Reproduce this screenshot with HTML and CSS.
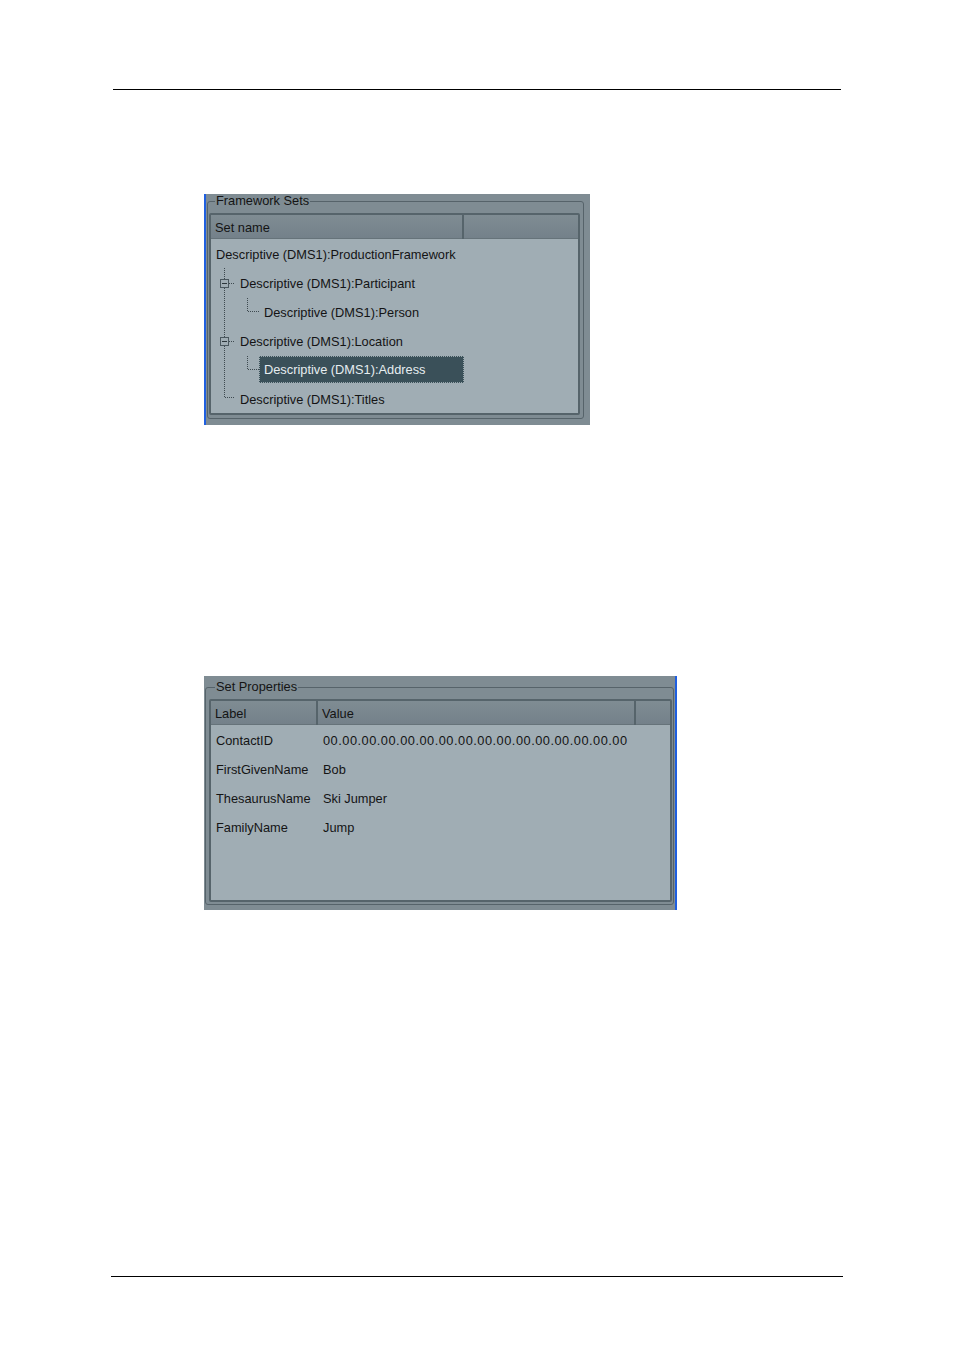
FILE: index.html
```html
<!DOCTYPE html>
<html>
<head>
<meta charset="utf-8">
<link rel="stylesheet" href="styles.css">
</head>
<body>
<div class="page">
  <div class="rule rule-top"></div>

  <div class="panel panel-sets">
    <fieldset class="group">
      <legend>Framework Sets</legend>
      <div class="list list-sets">
        <div class="head head-sets">
          <div class="hcell">Set name</div>
          <div class="hcell hfill"></div>
        </div>
        <div class="body">
          <svg class="tree" width="60" height="174" viewBox="0 0 60 174">
            <g stroke="#3e4a50" stroke-width="1" stroke-dasharray="1 1" fill="none">
              <line x1="13.5" y1="29" x2="13.5" y2="158"/>
              <line x1="18" y1="44.5" x2="24" y2="44.5"/>
              <line x1="18" y1="102.5" x2="24" y2="102.5"/>
              <line x1="14" y1="158.5" x2="24" y2="158.5"/>
              <line x1="36.5" y1="59" x2="36.5" y2="72"/>
              <line x1="37" y1="72.5" x2="48" y2="72.5"/>
              <line x1="36.5" y1="117" x2="36.5" y2="130"/>
              <line x1="37" y1="130.5" x2="48" y2="130.5"/>
            </g>
            <g stroke="#4b585f" stroke-width="1" fill="#a0adb4">
              <rect x="9.5" y="40.5" width="8" height="8"/>
              <rect x="9.5" y="98.5" width="8" height="8"/>
            </g>
            <g stroke="#2c363b" stroke-width="1">
              <line x1="11" y1="44.5" x2="16" y2="44.5"/>
              <line x1="11" y1="102.5" x2="16" y2="102.5"/>
            </g>
          </svg>
          <div class="row lvl0"><span class="item">Descriptive (DMS1):ProductionFramework</span></div>
          <div class="row lvl1"><span class="item">Descriptive (DMS1):Participant</span></div>
          <div class="row lvl2"><span class="item">Descriptive (DMS1):Person</span></div>
          <div class="row lvl1"><span class="item">Descriptive (DMS1):Location</span></div>
          <div class="row lvl2 sel-row"><span class="item selected">Descriptive (DMS1):Address</span></div>
          <div class="row lvl1"><span class="item">Descriptive (DMS1):Titles</span></div>
        </div>
      </div>
    </fieldset>
  </div>

  <div class="panel panel-props">
    <fieldset class="group">
      <legend>Set Properties</legend>
      <div class="list list-props">
        <div class="head head-props">
          <div class="hcell">Label</div>
          <div class="hcell">Value</div>
          <div class="hcell hfill"></div>
        </div>
        <div class="body">
          <div class="prow"><span>ContactID</span><span class="hex">00.00.00.00.00.00.00.00.00.00.00.00.00.00.00.00</span></div>
          <div class="prow"><span>FirstGivenName</span><span>Bob</span></div>
          <div class="prow"><span>ThesaurusName</span><span>Ski Jumper</span></div>
          <div class="prow"><span>FamilyName</span><span>Jump</span></div>
        </div>
      </div>
    </fieldset>
  </div>

  <div class="rule rule-bottom"></div>
</div>
</body>
</html>
```

FILE: styles.css
```css
html, body {
  margin: 0;
  padding: 0;
  background: #ffffff;
}

.page {
  width: 954px;
  height: 1349px;
  overflow: hidden;
  font-family: "Liberation Sans", Arial, sans-serif;
  font-size: 12.8px;
  color: #141414;
}

.rule {
  height: 1px;
  background: #000;
}

.rule-top {
  margin-top: 89px;
  margin-left: 113px;
  width: 728px;
}

.rule-bottom {
  margin-top: 366px;
  margin-left: 111px;
  width: 732px;
}

.panel {
  box-sizing: border-box;
  background: #7f8c93;
}

.panel-sets {
  margin-top: 104px;
  margin-left: 204px;
  width: 386px;
  height: 231px;
  border-left: 2px solid #1f5fe0;
  padding: 0 6px 6px 1px;
}

.panel-props {
  margin-top: 251px;
  margin-left: 204px;
  width: 473px;
  height: 234px;
  border-right: 2px solid #1f5fe0;
  padding: 4px 1px 5px 1px;
}

.group {
  margin: 0;
  border: 1px solid #56636a;
  border-radius: 3px;
  min-width: 0;
}

.panel-sets .group {
  padding: 5px 3px 3px 1px;
}

.panel-props .group {
  padding: 5px 1px 2px 3px;
}

.group legend {
  padding: 0 1px;
  margin-left: 6px;
  line-height: 14px;
  font-size: 12.8px;
  color: #141414;
}

.list {
  box-sizing: border-box;
  background: #a0adb4;
  border: 2px solid #56646b;
  border-radius: 2px;
}

.list-sets {
  height: 202px;
}

.list-props {
  height: 203px;
}

.head {
  display: grid;
  height: 24px;
  background: linear-gradient(#7f8c93, #74818a);
  border-bottom: 1px solid #66737a;
  box-sizing: border-box;
}

.head-sets {
  grid-template-columns: 253px 1fr;
}

.head-props {
  grid-template-columns: 107px 318px 1fr;
}

.hcell {
  box-sizing: border-box;
  padding-left: 4px;
  padding-top: 1px;
  line-height: 23px;
  border-right: 2px solid #56646b;
  color: #141414;
}

.hcell.hfill {
  border-right: none;
}

.body {
  position: relative;
}

.tree {
  position: absolute;
  left: 0;
  top: 0;
}

.row {
  box-sizing: border-box;
  height: 29px;
  display: flex;
  align-items: center;
  padding-top: 1px;
}

.lvl0 { padding-left: 5px; }
.lvl1 { padding-left: 29px; }
.lvl2 { padding-left: 53px; }

.sel-row {
  padding-left: 48px;
  padding-top: 0;
}

.item {
  white-space: nowrap;
}

.item.selected {
  box-sizing: border-box;
  width: 205px;
  height: 27px;
  line-height: 26px;
  padding-left: 4px;
  background: #3a5059;
  color: #e6edf0;
  border: 1px dotted #9aa8ae;
}

.prow {
  box-sizing: border-box;
  display: grid;
  grid-template-columns: 107px 1fr;
  height: 29px;
  align-items: center;
  padding-left: 5px;
  padding-top: 1px;
}

.prow span {
  white-space: nowrap;
}

.prow .hex {
  letter-spacing: 0.5px;
}
```
